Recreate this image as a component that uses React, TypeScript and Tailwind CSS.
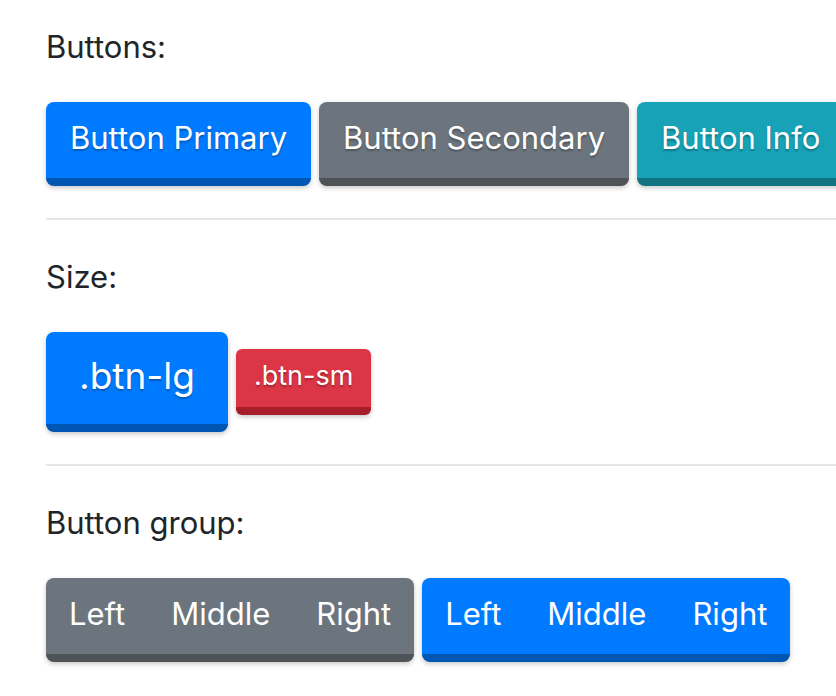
import React from "react";

type Tone = "primary" | "secondary" | "info" | "danger";

const TONES: Record<Tone, string> = {
  primary: "bg-[#007bff] border-[#0056b3]",
  secondary: "bg-[#6c757d] border-[#4e5358]",
  info: "bg-[#17a2b8] border-[#117482]",
  danger: "bg-[#dc3545] border-[#a71d2a]",
};

const BASE =
  "shrink-0 whitespace-nowrap text-white border-b-[8px] shadow-[0_2px_5px_rgba(0,0,0,0.22)] [text-shadow:0_2px_2px_rgba(0,0,0,0.28)]";

function Btn({
  tone,
  size = "md",
  children,
}: {
  tone: Tone;
  size?: "md" | "lg" | "sm";
  children: React.ReactNode;
}) {
  const sizes = {
    md: "h-[84px] px-6 pb-[4px] text-[31px] rounded-[8px]",
    lg: "h-[100px] px-[33px] pb-[4px] text-[37px] rounded-[8px]",
    sm: "h-[66px] px-[18px] pb-[4px] text-[27px] rounded-[6px]",
  };
  return (
    <button className={`${BASE} ${TONES[tone]} ${sizes[size]} flex items-center`}>
      {children}
    </button>
  );
}

function Group({ tone, items }: { tone: Tone; items: string[] }) {
  return (
    <div className={`${BASE} ${TONES[tone]} flex h-[84px] rounded-[8px]`}>
      {items.map((item) => (
        <button key={item} className="flex items-center px-[23px] pb-[4px] text-[31px]">
          {item}
        </button>
      ))}
    </div>
  );
}

function Label({ children }: { children: React.ReactNode }) {
  return <p className="text-[31px] leading-[45px] text-[#212529] mb-[33px]">{children}</p>;
}

function Rule() {
  return <hr className="border-0 h-[2px] bg-[#e6e6e6] -mr-[40px] mt-[32px] mb-[34px]" />;
}

export default function App() {
  return (
    <div
      className="w-[836px] h-[696px] overflow-hidden bg-white pl-[46px] pt-6"
      style={{ fontFamily: "Inter, 'Noto Sans', sans-serif" }}
    >
      <Label>Buttons:</Label>
      <div className="flex gap-2">
        <Btn tone="primary">Button Primary</Btn>
        <Btn tone="secondary">Button Secondary</Btn>
        <Btn tone="info">Button Info</Btn>
      </div>
      <Rule />
      <Label>Size:</Label>
      <div className="flex items-center gap-2">
        <Btn tone="primary" size="lg">
          .btn-lg
        </Btn>
        <Btn tone="danger" size="sm">
          .btn-sm
        </Btn>
      </div>
      <Rule />
      <Label>Button group:</Label>
      <div className="flex gap-2">
        <Group tone="secondary" items={["Left", "Middle", "Right"]} />
        <Group tone="primary" items={["Left", "Middle", "Right"]} />
      </div>
    </div>
  );
}
